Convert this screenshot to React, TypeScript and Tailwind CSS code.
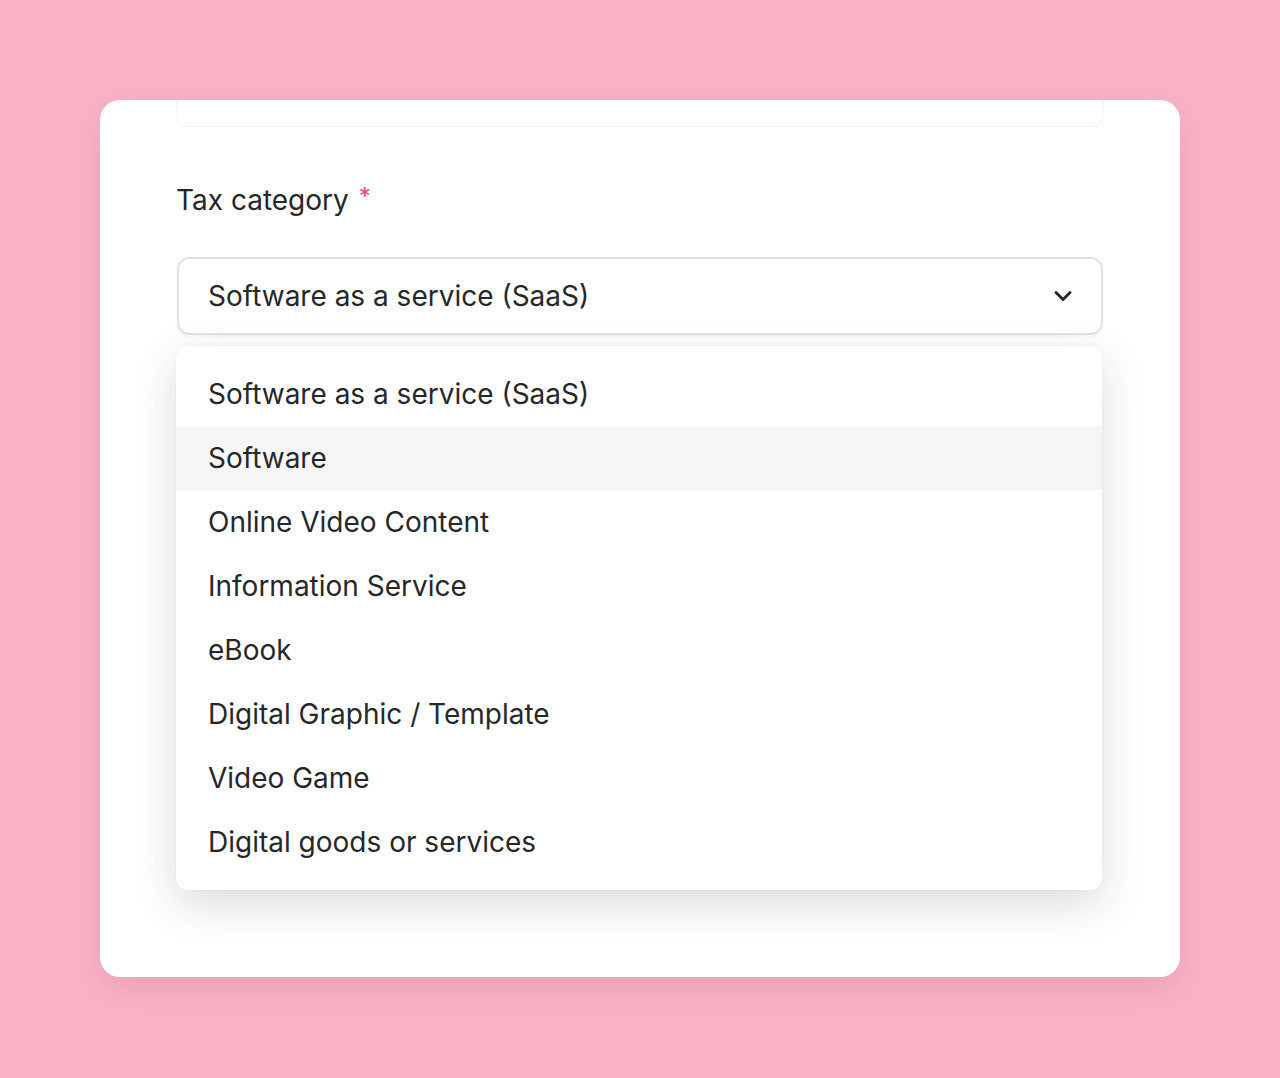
import { ChevronDown } from "lucide-react";

const options = [
  "Software as a service (SaaS)",
  "Software",
  "Online Video Content",
  "Information Service",
  "eBook",
  "Digital Graphic / Template",
  "Video Game",
  "Digital goods or services",
];

export default function App() {
  return (
    <div
      className="min-h-[1078px] bg-[#f9b3c5] px-[100px] pt-[100px] pb-[101px]"
      style={{ fontFamily: "Inter, 'Noto Sans', sans-serif" }}
    >
      <div className="h-[877px] bg-white rounded-[20px] overflow-hidden shadow-[0_12px_32px_rgba(120,40,70,0.12)] px-[76px]">
        {/* Previous field, cut off */}
        <div className="h-[27px] border border-t-0 border-[#f1f1f3] rounded-b-[12px]" />

        {/* Label */}
        <div className="mt-[55px] flex items-start text-[28px] leading-[36px] text-[#27272a]">
          <span>Tax category</span>
          <span className="ml-[10px] text-[#e8477e] text-[24px] leading-[30px]">*</span>
        </div>

        {/* Select */}
        <div className="mt-[39px] h-[78px] mx-px border-2 border-[#e2e2e5] rounded-[12px] flex items-center justify-between pl-[29px] pr-[24px] shadow-[0_2px_3px_rgba(0,0,0,0.04)]">
          <span className="text-[28px] text-[#27272a]">Software as a service (SaaS)</span>
          <ChevronDown className="w-[28px] h-[28px] text-[#27272a]" strokeWidth={2.5} />
        </div>

        {/* Options */}
        <div className="mt-[11px] mr-[2px] bg-white rounded-[12px] py-[16px] shadow-[0_14px_44px_rgba(30,30,60,0.16),0_0_0_1px_rgba(0,0,0,0.02)]">
          {options.map((o, i) => (
            <div
              key={o}
              className={
                "h-[64px] flex items-center pl-[32px] text-[28px] text-[#27272a] " +
                (i === 1 ? "bg-[#f6f6f7]" : "")
              }
            >
              {o}
            </div>
          ))}
        </div>
      </div>
    </div>
  );
}
